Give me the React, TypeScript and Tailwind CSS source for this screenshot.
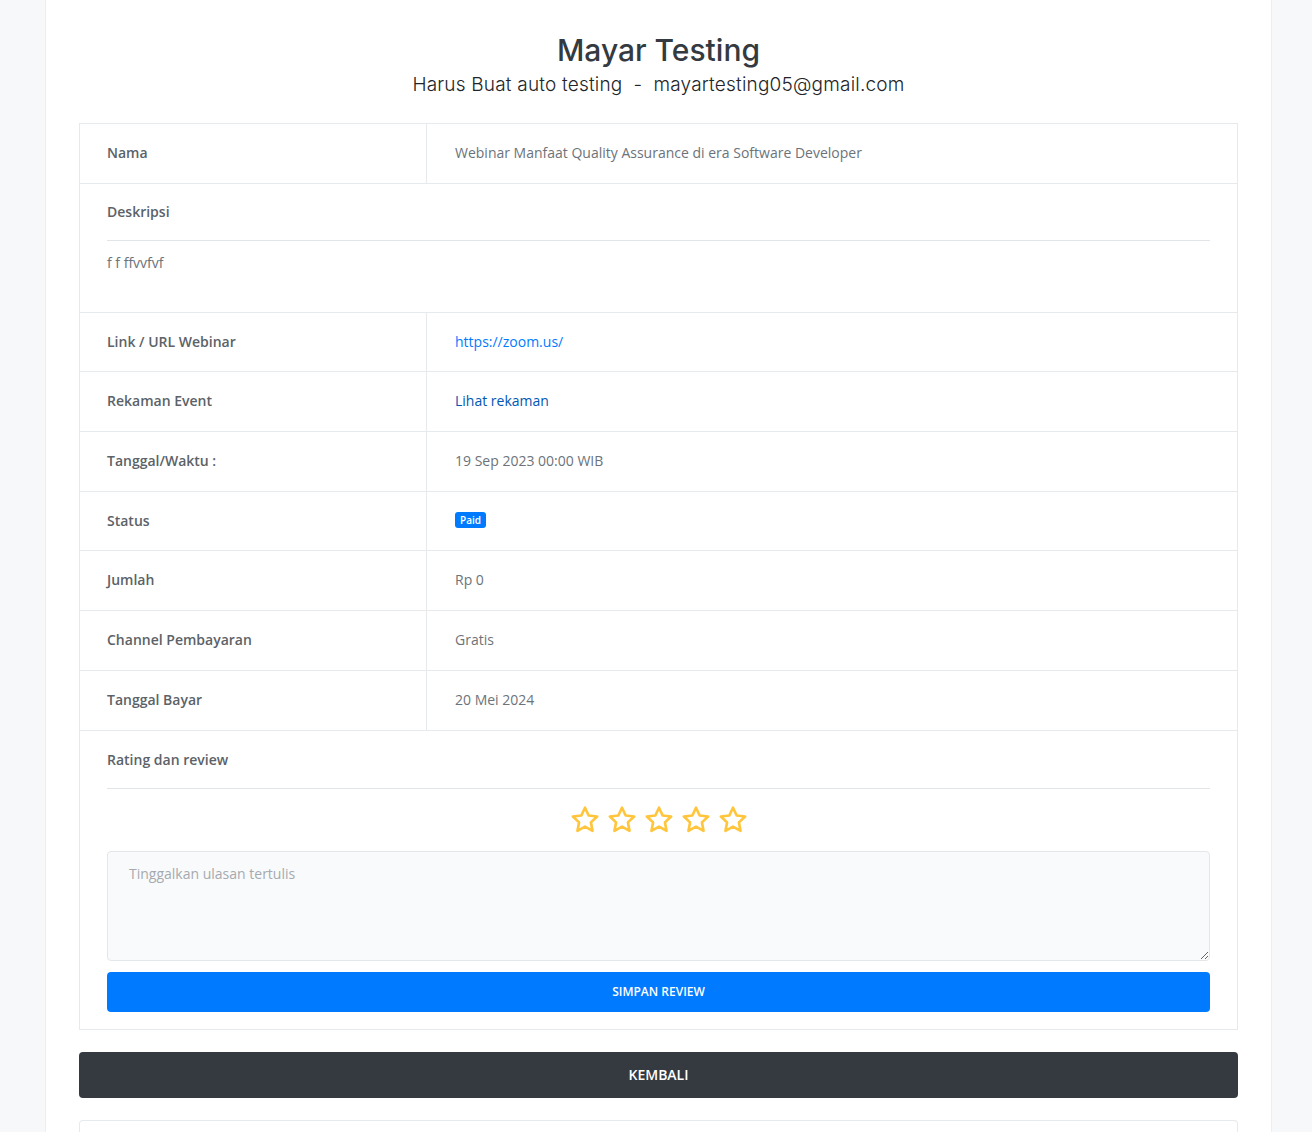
import React from "react";

const rows: { label: string; value: React.ReactNode }[] = [
  { label: "Nama", value: "Webinar Manfaat Quality Assurance di era Software Developer" },
];

const rows2: { label: string; value: React.ReactNode }[] = [
  {
    label: "Link / URL Webinar",
    value: <a className="text-[#007bff]">https://zoom.us/</a>,
  },
  {
    label: "Rekaman Event",
    value: <a className="text-[#0056b3]">Lihat rekaman</a>,
  },
  { label: "Tanggal/Waktu :", value: "19 Sep 2023 00:00 WIB" },
  {
    label: "Status",
    value: (
      <span className="inline-block rounded-[3px] bg-[#007bff] px-[5px] py-[2px] text-[10px] leading-[12px] font-semibold text-white">
        Paid
      </span>
    ),
  },
  { label: "Jumlah", value: "Rp 0" },
  { label: "Channel Pembayaran", value: "Gratis" },
  { label: "Tanggal Bayar", value: "20 Mei 2024" },
];

function Row({ label, value }: { label: string; value: React.ReactNode }) {
  return (
    <div className="flex h-[59.7px] border-b border-[#e7eaed]">
      <div className="flex w-[347px] items-center border-r border-[#e7eaed] pb-[2px] pl-[27px] text-[14px] font-semibold text-[#5b6268]">
        {label}
      </div>
      <div className="flex flex-1 items-center pb-[2px] pl-[28px] text-[14px] text-[#6c737a]">{value}</div>
    </div>
  );
}

function Star() {
  return (
    <svg width="32" height="32" viewBox="0 0 24 24" fill="none" stroke="#ffc53d" strokeWidth="2" strokeLinejoin="round">
      <path d="M12 2.8l2.75 5.8 6.35.8-4.65 4.4 1.2 6.3L12 17l-5.65 3.1 1.2-6.3L2.9 9.4l6.35-.8z" />
    </svg>
  );
}

export default function App() {
  return (
    <div className="min-h-[1132px] bg-[#f7f8fa]" style={{ fontFamily: '"Open Sans", "Noto Sans", sans-serif' }}>
      <div className="ml-[45px] min-h-[1132px] w-[1227px] border-x border-[#eceef1] bg-white px-[33px] pt-[29px]">
        <h1 className="text-center text-[30px] leading-[42px] font-medium text-[#343a40]" style={{ fontFamily: '"Inter", "Noto Sans", sans-serif' }}>
          Mayar Testing
        </h1>
        <p className="mt-[1px] text-center text-[19px] leading-[26px] font-light tracking-[0.2px] text-[#212529]" style={{ fontFamily: '"Inter", "Noto Sans", sans-serif' }}>
          Harus Buat auto testing&nbsp; -&nbsp; mayartesting05@gmail.com
        </p>

        <div className="mt-[25px] border border-[#e7eaed]">
          {rows.map((r) => (
            <Row key={r.label} {...r} />
          ))}
          <div className="border-b border-[#e7eaed] px-[27px] pt-[18px] pb-[39px]">
            <div className="text-[14px] leading-[20px] font-semibold text-[#5b6268]">Deskripsi</div>
            <div className="mt-[18px] border-t border-[#e2e5e8] pt-[12px] text-[14px] leading-[20px] text-[#6c737a]">
              f f ffvvfvf
            </div>
          </div>
          {rows2.map((r) => (
            <Row key={r.label} {...r} />
          ))}
          <div className="px-[27px] pt-[19px] pb-[17px]">
            <div className="text-[14px] leading-[20px] font-semibold text-[#5b6268]">Rating dan review</div>
            <div className="mt-[18px] border-t border-[#e2e5e8]" />
            <div className="mt-[15px] flex justify-center gap-[5px]">
              <Star />
              <Star />
              <Star />
              <Star />
              <Star />
            </div>
            <textarea
              placeholder="Tinggalkan ulasan tertulis"
              className="mt-[15px] block h-[110px] w-full rounded-[4px] border border-[#e4e7ea] bg-[#f9fafb] px-[21px] py-[12px] text-[14px] leading-[20px] text-[#6c737a] placeholder:text-[#a5aab0] outline-none"
            />
            <button className="mt-[11px] h-[40px] w-full rounded-[4px] bg-[#007bff] text-[12px] font-semibold text-white">
              SIMPAN REVIEW
            </button>
          </div>
        </div>

        <button className="mt-[22px] h-[46px] w-full rounded-[4px] bg-[#343a40] text-[14px] font-semibold text-white">
          KEMBALI
        </button>

        <div className="mt-[22px] h-[40px] rounded-t-[4px] border border-b-0 border-[#e7eaed]" />
      </div>
    </div>
  );
}
